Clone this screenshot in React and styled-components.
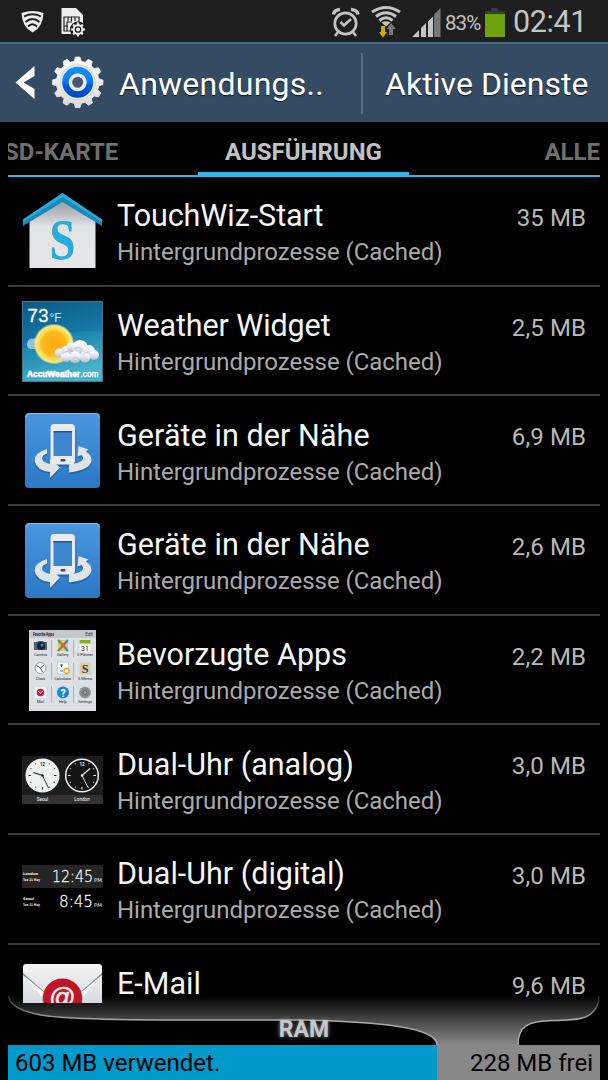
import React from "react"
import styled, { createGlobalStyle } from "styled-components"

const GlobalStyle = createGlobalStyle`
  * {
    box-sizing: border-box;
  }
  body {
    margin: 0;
    background: #000;
    font-family: Roboto, "Liberation Sans", sans-serif;
  }
  svg {
    display: block;
    flex: none;
  }
`

const Screen = styled.div`
  display: flex;
  flex-direction: column;
  width: 608px;
  height: 1080px;
  background: #000;
  overflow: hidden;
`

const StatusBar = styled.div`
  display: flex;
  justify-content: space-between;
  height: 42px;
  flex: none;
  background: #1e1e1e;
`

const Percent = styled.span`
  width: 39px;
  margin-left: 4px;
  color: #c4c4c4;
  font-size: 20.5px;
  line-height: 46px;
  letter-spacing: ${props => props.$spacing}px;
  white-space: nowrap;
`

const Clock = styled.span`
  width: 103px;
  padding-left: 8px;
  color: #c4c4c4;
  font-size: 30.5px;
  line-height: 44px;
  letter-spacing: ${props => props.$spacing}px;
  white-space: nowrap;
`

const StatusGroup = styled.div`
  display: flex;
`

const ActionBar = styled.div`
  display: flex;
  align-items: center;
  height: 80px;
  flex: none;
  border-top: 2px solid #4d6c7f;
  background: #344b63;
  color: #fff;
`

const ActionText = styled.span`
  width: ${props => props.$width}px;
  margin-left: ${props => props.$left}px;
  padding-top: 2px;
  font-size: 32px;
  line-height: 40px;
  letter-spacing: ${props => props.$spacing}px;
  white-space: nowrap;
  text-shadow: 0 1px 1px rgba(0, 0, 0, 0.7);
`

const ActionDivider = styled.div`
  width: 2px;
  height: 61px;
  margin-left: 4px;
  background: #596d81;
`

const Tabs = styled.div`
  display: grid;
  grid-template-columns: 190px 211px 191px;
  height: 55px;
  flex: none;
  margin: 0 8px;
  border-bottom: 2px solid #33b5e5;
  overflow: hidden;
`

const Tab = styled.div`
  display: flex;
  justify-content: ${props => props.$align};
  height: 55px;
  border-bottom: 5px solid ${props => (props.$active ? "#33b5e5" : "transparent")};
  color: ${props => (props.$active ? "#c2c2c2" : "#6f6f6f")};
  font-size: 24px;
  font-weight: 700;
  line-height: 61px;
  white-space: nowrap;
`

const TabLabel = styled.span`
  margin-left: ${props => props.$shift || 0}px;
`

const List = styled.div`
  position: relative;
  z-index: 1;
  height: 826px;
  flex: none;
  margin: 0 8px;
  overflow: hidden;
`

const Row = styled.div`
  display: flex;
  height: 109.7px;
  padding: 0 14px;
  border-bottom: 2px solid #3b3b3b;
`

const RowIcon = styled.div`
  display: flex;
  align-items: center;
  width: 81px;
  padding-top: 1px;
  flex: none;
`

const RowText = styled.div`
  flex: 1;
  padding: 19.3px 0 0 14px;
`

const RowTitle = styled.div`
  color: #f5f5f5;
  font-size: 30.5px;
  line-height: 40px;
  letter-spacing: ${props => props.$spacing || 0}px;
  white-space: nowrap;
`

const RowSub = styled.div`
  color: #aaa;
  font-size: 24px;
  line-height: 32px;
  letter-spacing: -0.03px;
  white-space: nowrap;
`

const RowSize = styled.div`
  color: #b8b8b8;
  font-size: 24px;
  line-height: 82px;
  letter-spacing: 0.1px;
  white-space: nowrap;
`

const Memory = styled.div`
  position: relative;
  height: 84px;
  flex: none;
  margin: -7px 8px 0;
`

const MemoryLabel = styled.div`
  position: absolute;
  top: 21px;
  left: 0;
  width: 100%;
  color: #c8c8c8;
  font-size: 23px;
  font-weight: 700;
  line-height: 26px;
  text-align: center;
  text-shadow: 0 0 4px #999;
`

const MemoryBar = styled.div`
  display: flex;
  height: 36px;
`

const MemoryPart = styled.div`
  width: ${props => props.$width}px;
  padding: 0 7px;
  background: ${props => (props.$used ? "#0099cc" : "#888")};
  color: #000;
  font-size: 24px;
  line-height: 37px;
  text-align: ${props => (props.$used ? "left" : "right")};
  white-space: nowrap;
`

const gearPath = (cx, cy, outer, inner, teeth) => {
  const step = (Math.PI * 2) / teeth
  const offsets = [[-0.32, inner], [-0.17, outer], [0.17, outer], [0.32, inner]]
  const points = []
  for (let i = 0; i < teeth; i++) {
    offsets.forEach(([o, r]) => {
      const a = i * step + o * step - Math.PI / 2
      points.push(`${(cx + r * Math.cos(a)).toFixed(2)} ${(cy + r * Math.sin(a)).toFixed(2)}`)
    })
  }
  return `M${points.join("L")}Z`
}

const StatusLeft = () => (
  <svg width="100" height="42">
    <path d="M21.500 13Q32.500 9 43.500 13Q43 27 32.500 32.500Q22 27 21.500 13Z" fill="#eee" />
    <g fill="none" stroke="#1e1e1e" strokeWidth="1.800">
      <path d="M24 16.500Q32.500 12 41 16.500" />
      <path d="M25.500 22Q32.500 16 39.500 22" />
      <path d="M28 26.500Q32.500 22 37 26.500" />
    </g>
    <path d="M61.500 8H76L83 15V34H61.500Z" fill="#eee" />
    <path d="M64 17H79V31H64ZM68 17V21M71.500 17V21M75 17V21M64 26H68M67 31V22H72M71 31V27H75" fill="none" stroke="#1e1e1e" strokeWidth="1.200" />
    <circle cx="78" cy="29.500" r="8" fill="#1e1e1e" />
    <path d={gearPath(78, 29.5, 7, 5.3, 8)} fill="#eee" />
    <circle cx="78" cy="29.500" r="2.700" fill="none" stroke="#1e1e1e" strokeWidth="1.300" />
  </svg>
)

const AlarmWifiSignal = () => (
  <svg width="110" height="42">
    <g fill="none" stroke="#c4c4c4">
      <circle cx="14.500" cy="23.500" r="10.700" strokeWidth="2.700" />
      <path d="M9.500 22L13 25.500L20 19" strokeWidth="2.500" />
      <path d="M2.500 14.500Q3 10 9 9.500M20 9.500Q26.500 10 27 14.500" strokeWidth="3.500" />
      <path d="M7 32L4 36M22 32L25 36" strokeWidth="2.500" />
    </g>
    <g fill="none" stroke="#c4c4c4" strokeWidth="3">
      <path d="M41 12Q55 3 69 12" />
      <path d="M45 16.500Q55 9 65 16.500" />
      <path d="M48.500 20.500Q55 15 61.500 20.500" />
    </g>
    <path d="M50.500 22.500Q55 20 59.500 22.500L55 26.500Z" fill="#c4c4c4" />
    <path d="M50 26H54V32H56L52 37.500L48 32H50Z" fill="#d1ae00" />
    <path d="M58 35H62V29H65L60 23L55.500 29H58Z" fill="#777" />
    <path d="M81.500 37V36.500L88 30V37ZM90 37V28L95 23V37ZM97 37V21.500L102 16.500V37Z" fill="#c4c4c4" />
    <path d="M103 37V14.500L109.500 8V37Z" fill="#777" />
  </svg>
)

const Battery = () => (
  <svg width="21" height="42">
    <path d="M7 8H14V11H21V14H1V11H7Z" fill="#3b3b3b" />
    <rect x="1" y="14" width="20" height="23" fill="#70a00b" />
  </svg>
)

const BackGear = () => (
  <svg width="106" height="78">
    <path d="M34.500 22V32L23.500 38.500L34.500 45V55L15.500 38.500Z" fill="#fff" />
    <defs>
      <linearGradient id="gearBody" x1="0" y1="0" x2="0" y2="1">
        <stop offset="0" stopColor="#fff" />
        <stop offset="1" stopColor="#d9d9d9" />
      </linearGradient>
      <linearGradient id="gearBlue" x1="0" y1="0" x2="0" y2="1">
        <stop offset="0" stopColor="#1492fb" />
        <stop offset="0.500" stopColor="#0878ee" />
        <stop offset="0.600" stopColor="#0059d7" />
        <stop offset="1" stopColor="#0047bd" />
      </linearGradient>
    </defs>
    <path d={gearPath(77.7, 38.3, 25.3, 21.3, 12)} fill="url(#gearBody)" stroke="#e4e4e4" strokeWidth="1" strokeLinejoin="round" />
    <circle cx="77.700" cy="38.300" r="18" fill="#cfd2d5" />
    <circle cx="77.700" cy="38.300" r="17.200" fill="#e6e8ea" />
    <circle cx="77.700" cy="38.300" r="15.500" fill="url(#gearBlue)" />
    <circle cx="77.700" cy="38.300" r="7.300" fill="#6d7682" stroke="#e8ebed" strokeWidth="3.400" />
    <circle cx="77.700" cy="38.300" r="5" fill="#425871" />
  </svg>
)

const HomeIcon = () => (
  <svg width="81" height="78" viewBox="0 0 81 78">
    <defs>
      <linearGradient id="house" x1="0" y1="0" x2="0" y2="1">
        <stop offset="0.100" stopColor="#a3a7ab" />
        <stop offset="0.400" stopColor="#e1e3e5" />
        <stop offset="1" stopColor="#e4e6e8" />
      </linearGradient>
    </defs>
    <path d="M7.500 27L40.500 7L73.500 27V76H7.500Z" fill="url(#house)" />
    <path d="M1 27.500L40.500 1L80 27.500V34L40.500 10L1 34Z" fill="#1789ba" />
    <path d="M1 27.500L40.500 1L80 27.500V30L40.500 5L1 30Z" fill="#29aadb" />
    <text x="40.500" y="66.500" textAnchor="middle" fontFamily="Liberation Serif" fontWeight="700" fontSize="57" textLength="26" lengthAdjust="spacingAndGlyphs" fill="#80888c">S</text>
    <text x="40.500" y="67" textAnchor="middle" fontFamily="Liberation Serif" fontWeight="700" fontSize="57" textLength="25" lengthAdjust="spacingAndGlyphs" fill="#20afe5">S</text>
  </svg>
)

const WeatherIcon = () => (
  <svg width="81" height="81" viewBox="0 0 81 81">
    <defs>
      <linearGradient id="sky" x1="0" y1="0" x2="0.300" y2="1">
        <stop offset="0" stopColor="#0c5987" />
        <stop offset="0.500" stopColor="#177eaa" />
        <stop offset="1" stopColor="#47b1c9" />
      </linearGradient>
      <radialGradient id="sun">
        <stop offset="0" stopColor="#fba916" />
        <stop offset="0.580" stopColor="#fdb71c" />
        <stop offset="0.720" stopColor="#fcdc42" />
        <stop offset="0.890" stopColor="#f5e985" />
        <stop offset="1" stopColor="#f5e985" stopOpacity="0" />
      </radialGradient>
      <linearGradient id="cloud" x1="0" y1="0" x2="0" y2="1">
        <stop offset="0.300" stopColor="#f6f7fa" />
        <stop offset="1" stopColor="#b6bccb" />
      </linearGradient>
    </defs>
    <rect x="0.500" y="0.500" width="80" height="80" fill="url(#sky)" stroke="#50788d" />
    <path d="M0 48Q40 27 81 31V0H0Z" fill="#075b8b" opacity="0.200" />
    <path d="M5 43Q6 37 11 38Q15 35 18 42V48H8Q5 47 5 43Z" fill="#9ac1d7" />
    <circle cx="32" cy="43" r="20.500" fill="url(#sun)" />
    <g fill="url(#cloud)">
      <circle cx="37" cy="52" r="4.500" />
      <circle cx="44" cy="50" r="5" />
      <circle cx="49" cy="46" r="4.500" />
      <circle cx="58" cy="47" r="8" />
      <circle cx="67" cy="50" r="6" />
      <circle cx="72" cy="54" r="5" />
      <circle cx="44" cy="56" r="5" />
      <circle cx="53" cy="56" r="6" />
      <circle cx="63" cy="56" r="5.500" />
    </g>
    <g fill="none" stroke="#c3c9d6">
      <path d="M41 53Q45 48 49 53M52 48Q56 44 60 49M60 54Q65 49 69 54M50 58Q54 54 58 59" />
    </g>
    <text x="5.500" y="20.500" fontFamily="Liberation Sans" fontSize="18.500" textLength="21" fill="#fff" stroke="#fff" strokeWidth="0.300">73</text>
    <text x="27.500" y="20.500" fontFamily="Liberation Sans" fontSize="12" textLength="12" lengthAdjust="spacingAndGlyphs" fill="#c5eef5">°F</text>
    <g fontFamily="Liberation Sans" fontSize="9" fill="#fff" stroke="#fff">
      <text x="5" y="75.500" fontWeight="700" strokeWidth="0.600" textLength="53" lengthAdjust="spacingAndGlyphs">AccuWeather</text>
      <text x="58.500" y="75.500" strokeWidth="0.400" textLength="18" lengthAdjust="spacingAndGlyphs">.com</text>
    </g>
  </svg>
)

const NearbyIcon = () => (
  <svg width="81" height="81" viewBox="0 0 81 81">
    <defs>
      <linearGradient id="tile" x1="0" y1="0" x2="0" y2="1">
        <stop offset="0" stopColor="#4b96e0" />
        <stop offset="1" stopColor="#2b78c5" />
      </linearGradient>
    </defs>
    <rect x="3" y="3" width="75" height="75" rx="4" fill="url(#tile)" />
    <path d="M4 7Q4 3.500 8 3.500H74Q77 3.500 77 7" fill="none" stroke="#83b9ef" />
    <g transform="translate(0 1.200)" fill="#1d5989" opacity="0.600">
      <rect x="28.500" y="14.500" width="25" height="41" rx="4" />
      <path d="M24.500 40Q10 44 12.500 52Q14 61 28 62V69L38 58L28 49V54Q12 50 24.500 44Z" />
      <path d="M47 54.500V63Q68 61 69.500 51Q70 45 64 42L67 40L56.500 36L55.500 47L59 46Q66 52 47 54.500Z" />
    </g>
    <path d="M25 39Q12 43 12.500 51Q15 61 28 62V68L38 57.500L28 49V54Q20 52 20 48.500Q20 45 25 43.500Z" fill="#dfe4e8" />
    <path d="M47 54.500V62.500Q68 60 69.500 50.500Q69.500 45 64 41.500L66.500 39.500L56.500 36L55.500 46.500L59.500 45Q66 52 47 54.500Z" fill="#dfe4e8" />
    <rect x="28.500" y="14" width="24.500" height="40.500" rx="4" fill="#e8ebee" />
    <rect x="31.500" y="21" width="18.500" height="25" fill="#3d86cd" />
    <rect x="31.500" y="21" width="18.500" height="1.500" fill="#205585" />
    <rect x="38.500" y="49" width="5" height="2.500" rx="1" fill="#3f4e5a" />
  </svg>
)

const gridLabels = ["Camera", "Gallery", "S Planner", "Clock", "Calculator", "S Memo", "Mail", "Help", "Settings"]

const FavoritesIcon = () => (
  <svg width="81" height="81" viewBox="0 0 81 81">
    <rect x="7" y="0" width="67" height="81" fill="#dce0e4" />
    <rect x="7" y="0" width="67" height="8" fill="#c4c9ce" />
    <text x="11" y="6" fontSize="4.500" fill="#333" stroke="#333" strokeWidth="0.200" textLength="21" lengthAdjust="spacingAndGlyphs">Favorite Apps</text>
    <text x="67" y="6" textAnchor="middle" fontSize="4.500" fill="#333">Edit</text>
    <path d="M29.500 10V27M51.500 10V27M29.500 33V50M51.500 33V50M29.500 56V73M51.500 56V73" stroke="#aeb3b8" />
    {gridLabels.map((label, i) => (
      <text key={label} x={18.5 + (i % 3) * 22.3} y={26 + Math.floor(i / 3) * 23.5} textAnchor="middle" fontSize="3.800" fill="#222">{label}</text>
    ))}
    <path d="M12 12H15L16 11H21L22 12H25V20H12Z" fill="#52606c" />
    <circle cx="19" cy="16" r="4" fill="#0f2537" />
    <circle cx="20" cy="15" r="1.500" fill="#388ab9" />
    <rect x="36" y="10" width="10" height="11" fill="#f6c43b" />
    <path d="M36 10L46 21M46 10L36 21" stroke="#348fc3" strokeWidth="2" />
    <circle cx="41" cy="15" r="2" fill="#e95935" />
    <rect x="57.500" y="10" width="11" height="12" fill="#f7f7f3" />
    <rect x="57.500" y="10" width="11" height="3.500" fill="#82af20" />
    <text x="63" y="20.500" textAnchor="middle" fontSize="7" fill="#333">31</text>
    <circle cx="18.500" cy="38" r="5.500" fill="#f8f8f8" stroke="#a1a6aa" />
    <path d="M14.500 35.500L18.500 38L22 35M18.500 38L20.500 42" fill="none" stroke="#333" strokeWidth="0.800" />
    <rect x="35.500" y="32" width="11" height="12" fill="#f6fbfd" stroke="#a9c3cf" strokeWidth="0.700" />
    <path d="M38 35H41M39.500 34V37M38 41H41" stroke="#407990" />
    <circle cx="44.500" cy="41" r="2.500" fill="none" stroke="#f2a22c" strokeWidth="1.300" />
    <rect x="57.500" y="32.500" width="11" height="12" fill="#dccda9" />
    <text x="63" y="42.500" textAnchor="middle" fontFamily="Liberation Serif" fontWeight="700" fontSize="12" fill="#24405c">S</text>
    <rect x="13" y="57" width="11" height="11" fill="#f2f3f4" />
    <circle cx="18.500" cy="62.500" r="3.800" fill="#c91f36" />
    <path d="M16.500 61L18.500 63.500L20.500 61" fill="none" stroke="#fff" />
    <circle cx="41" cy="62.500" r="6" fill="#1988cf" />
    <text x="41" y="66.500" textAnchor="middle" fontWeight="700" fontSize="10.500" fill="#fff">?</text>
    <circle cx="63" cy="62.500" r="6" fill="#9a9fa4" />
    <path d={gearPath(63, 62.5, 5, 4, 10)} fill="#7f858a" />
    <circle cx="63" cy="62.500" r="2" fill="#9da3a8" stroke="#686d70" />
  </svg>
)

const ticks = [0, 30, 60, 90, 120, 150, 180, 210, 240, 270, 300, 330]

const ClockFace = ({ cx, face, ink, minute, hour }) => (
  <g>
    <circle cx={cx} cy="19.500" r="16.300" fill={face} stroke="#eef0f0" strokeWidth="1.500" />
    {ticks.slice(1).map(t => (
      <path key={t} d={`M${cx} 5.500V${t % 90 ? 6.5 : 8}`} stroke={ink} transform={`rotate(${t} ${cx} 19.500)`} />
    ))}
    <text x={cx} y="9.800" textAnchor="middle" fontSize="4.500" fontWeight="700" fill={ink}>12</text>
    <path d={`M${cx} 19.500L${minute}`} stroke={ink} strokeWidth="0.900" />
    <path d={`M${cx} 19.500L${hour}`} stroke={ink} strokeWidth="1.300" />
    <circle cx={cx} cy="19.500" r="1.200" fill={ink} />
  </g>
)

const AnalogIcon = () => (
  <svg width="81" height="48" viewBox="0 0 81 48">
    <rect width="81" height="48" fill="#1c1c1c" />
    <rect y="39" width="81" height="9" fill="#323232" />
    <ClockFace cx={20.5} face="#eef0f0" ink="#222" minute="26.500 32" hour="11.500 16.500" />
    <ClockFace cx={60} face="#141414" ink="#f1f1f1" minute="66 31.500" hour="68 12.500" />
    <text x="20.500" y="45" textAnchor="middle" fontSize="4.600" fill="#fff">Seoul</text>
    <text x="60" y="45" textAnchor="middle" fontSize="4.600" fill="#fff">London</text>
  </svg>
)

const DigitalIcon = () => (
  <svg width="81" height="50" viewBox="0 0 81 50">
    <rect y="1" width="81" height="23" fill="#252525" />
    <g fill="#f4f4f4" fontFamily="DejaVu Sans">
      <text x="1" y="11" fontSize="3.600" fontWeight="700" textLength="15" lengthAdjust="spacingAndGlyphs">London</text>
      <text x="1" y="16.500" fontSize="3.600" fontWeight="700" textLength="17" lengthAdjust="spacingAndGlyphs">Tue 21 May</text>
      <text x="30" y="18" fontSize="16" fontWeight="200" textLength="41" lengthAdjust="spacingAndGlyphs" stroke="#f4f4f4" strokeWidth="0.300">12:45</text>
      <text x="72" y="18" fontSize="5" textLength="8" lengthAdjust="spacingAndGlyphs">PM</text>
      <text x="1" y="36" fontSize="3.600" fontWeight="700" textLength="11" lengthAdjust="spacingAndGlyphs">Seoul</text>
      <text x="1" y="42" fontSize="3.600" fontWeight="700" textLength="17" lengthAdjust="spacingAndGlyphs">Tue 21 May</text>
      <text x="37" y="43" fontSize="16" fontWeight="200" textLength="34" lengthAdjust="spacingAndGlyphs" stroke="#f4f4f4" strokeWidth="0.300">8:45</text>
      <text x="72" y="43" fontSize="5" textLength="8" lengthAdjust="spacingAndGlyphs">PM</text>
    </g>
  </svg>
)

const EmailIcon = () => (
  <svg width="81" height="70" viewBox="0 0 81 70">
    <defs>
      <linearGradient id="letter" x1="0" y1="0" x2="0" y2="1">
        <stop offset="0" stopColor="#f4f4f4" />
        <stop offset="0.600" stopColor="#d7dadd" />
      </linearGradient>
    </defs>
    <rect x="1" y="0" width="79" height="65" rx="3" fill="url(#letter)" />
    <path d="M1 9L26 31L21 33L1 11Z" fill="#888d92" />
    <path d="M80 9L55 31L60 33L80 11Z" fill="#888d92" />
    <path d="M1 11L20 33L23 29Z" fill="#fbfbfb" />
    <path d="M80 11L61 33L58 29Z" fill="#fbfbfb" />
    <circle cx="40.500" cy="35" r="20.300" fill="#8f969b" opacity="0.600" />
    <circle cx="40.500" cy="34" r="19.500" fill="#be1626" />
    <text x="40.500" y="41.500" textAnchor="middle" fontSize="26" fontFamily="Liberation Sans" fill="#eee" stroke="#eee" strokeWidth="0.600">@</text>
  </svg>
)

const apps = [
  { title: "TouchWiz-Start", size: "35 MB", icon: HomeIcon, spacing: -0.07 },
  { title: "Weather Widget", size: "2,5 MB", icon: WeatherIcon, spacing: -0.12 },
  { title: "Geräte in der Nähe", size: "6,9 MB", icon: NearbyIcon, spacing: 0.07 },
  { title: "Geräte in der Nähe", size: "2,6 MB", icon: NearbyIcon, spacing: 0.07 },
  { title: "Bevorzugte Apps", size: "2,2 MB", icon: FavoritesIcon },
  { title: "Dual-Uhr (analog)", size: "3,0 MB", icon: AnalogIcon },
  { title: "Dual-Uhr (digital)", size: "3,0 MB", icon: DigitalIcon },
  { title: "E-Mail", size: "9,6 MB", icon: EmailIcon }
]

// curved funnel that leads from the list into the free part of the bar
const Funnel = () => (
  <svg width="592" height="49" viewBox="0 0 592 49">
    <defs>
      <linearGradient id="funnel" gradientUnits="userSpaceOnUse" x1="0" y1="0" x2="0" y2="49">
        <stop offset="0" stopColor="#000" />
        <stop offset="0.500" stopColor="#484848" />
        <stop offset="1" stopColor="#888" />
      </linearGradient>
      <linearGradient id="edge" gradientUnits="userSpaceOnUse" x1="0" y1="0" x2="0" y2="24">
        <stop offset="0" stopColor="#222" />
        <stop offset="1" stopColor="#aaa" />
      </linearGradient>
    </defs>
    <path d="M0 0Q3 18 56 21.500Q90 23.500 152 24H296C370 26 429 31 429 49H510C510 30 520 25 545 24.500C565 24 590 26 591 0Z" fill="url(#funnel)" />
    <path d="M0.500 0Q3 18 56 21.500Q90 23.500 152 24H296C370 26 429 31 429 49M510 49C510 30 520 25 545 24.500C565 24 590 26 591 0" fill="none" stroke="url(#edge)" strokeWidth="1.500" />
  </svg>
)

const App = () => (
  <React.Fragment>
    <GlobalStyle />
    <Screen>
      <StatusBar>
        <StatusLeft />
        <StatusGroup>
          <AlarmWifiSignal />
          <Percent $spacing={-0.9}>83%</Percent>
          <Battery />
          <Clock $spacing={-0.4}>02:41</Clock>
        </StatusGroup>
      </StatusBar>
      <ActionBar>
        <BackGear />
        <ActionText $left={13} $width={238} $spacing={0.25}>Anwendungs..</ActionText>
        <ActionDivider />
        <ActionText $left={22} $width={210} $spacing={0.05}>Aktive Dienste</ActionText>
      </ActionBar>
      <Tabs>
        <Tab $align="flex-start">
          <TabLabel $shift={-4}>SD-KARTE</TabLabel>
        </Tab>
        <Tab $align="center" $active>
          <TabLabel>AUSFÜHRUNG</TabLabel>
        </Tab>
        <Tab $align="flex-end">
          <TabLabel>ALLE</TabLabel>
        </Tab>
      </Tabs>
      <List>
        {apps.map(({ title, size, icon: Icon, spacing }, key) => (
          <Row key={key}>
            <RowIcon>
              <Icon />
            </RowIcon>
            <RowText>
              <RowTitle $spacing={spacing}>{title}</RowTitle>
              <RowSub>Hintergrundprozesse (Cached)</RowSub>
            </RowText>
            <RowSize>{size}</RowSize>
          </Row>
        ))}
      </List>
      <Memory>
        <Funnel />
        <MemoryLabel>RAM</MemoryLabel>
        <MemoryBar>
          <MemoryPart $used $width={429}>603 MB verwendet.</MemoryPart>
          <MemoryPart $width={163}>228 MB frei</MemoryPart>
        </MemoryBar>
      </Memory>
    </Screen>
  </React.Fragment>
)

export default App
